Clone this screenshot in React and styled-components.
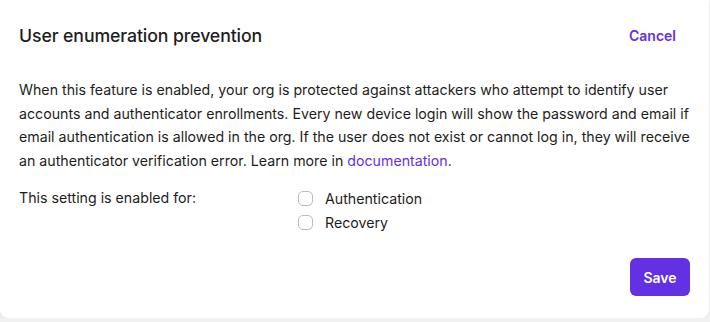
import React from 'react';
import styled, { createGlobalStyle } from 'styled-components';

const Global = createGlobalStyle`
  html, body {
    margin: 0;
    padding: 0;
    background: #f1f1f2;
    font-family: Inter, "Noto Sans", sans-serif;
    color: #1d1d21;
  }
`;

const Card = styled.div`
  box-sizing: border-box;
  width: 709px;
  height: 318px;
  background: #ffffff;
  border-radius: 0 0 8px 8px;
  box-shadow: 0 1px 3px rgba(0, 0, 0, 0.06);
  padding: 23px 19px 22px 19px;
  display: flex;
  flex-direction: column;
`;

const Header = styled.div`
  display: flex;
  align-items: center;
  justify-content: space-between;
  height: 24px;
  padding-right: 14px;
`;

const Title = styled.h2`
  margin: 0;
  font-size: 17.7px;
  font-weight: 500;
  letter-spacing: -0.1px;
`;

const LinkButton = styled.button`
  background: none;
  border: 0;
  padding: 0;
  font-family: inherit;
  font-size: 14px;
  font-weight: 600;
  color: #6430e4;
  cursor: pointer;
`;

const Body = styled.p`
  margin: 31px 0 0;
  font-size: 14.2px;
  line-height: 23.5px;
  max-width: 672px;
`;

const Link = styled.a`
  color: #6430e4;
  text-decoration: none;
`;

const SettingRow = styled.div`
  display: grid;
  grid-template-columns: 279px 1fr;
  margin-top: 14px;
  font-size: 14.2px;
`;

const Label = styled.div`
  line-height: 24px;
`;

const Options = styled.div`
  display: flex;
  flex-direction: column;
`;

const Option = styled.label`
  display: flex;
  align-items: center;
  gap: 12px;
  height: 24px;
  cursor: pointer;
`;

const Box = styled.span`
  box-sizing: border-box;
  width: 15px;
  height: 15px;
  border: 1.5px solid #b9b9bf;
  border-radius: 5px;
  background: #fff;
`;

const Footer = styled.div`
  margin-top: auto;
  display: flex;
  justify-content: flex-end;
`;

const PrimaryButton = styled.button`
  width: 60px;
  height: 38px;
  border: 0;
  border-radius: 6px;
  background: #6430e4;
  color: #fff;
  font-family: inherit;
  font-size: 14px;
  font-weight: 600;
  cursor: pointer;
`;

export default function App() {
  return (
    <>
      <Global />
      <Card>
        <Header>
          <Title>User enumeration prevention</Title>
          <LinkButton>Cancel</LinkButton>
        </Header>
        <Body>
          When this feature is enabled, your org is protected against attackers who attempt to identify user
          accounts and authenticator enrollments. Every new device login will show the password and email if
          email authentication is allowed in the org. If the user does not exist or cannot log in, they will receive
          an authenticator verification error. Learn more in <Link href="#">documentation</Link>.
        </Body>
        <SettingRow>
          <Label>This setting is enabled for:</Label>
          <Options>
            <Option><Box />Authentication</Option>
            <Option><Box />Recovery</Option>
          </Options>
        </SettingRow>
        <Footer>
          <PrimaryButton>Save</PrimaryButton>
        </Footer>
      </Card>
    </>
  );
}
